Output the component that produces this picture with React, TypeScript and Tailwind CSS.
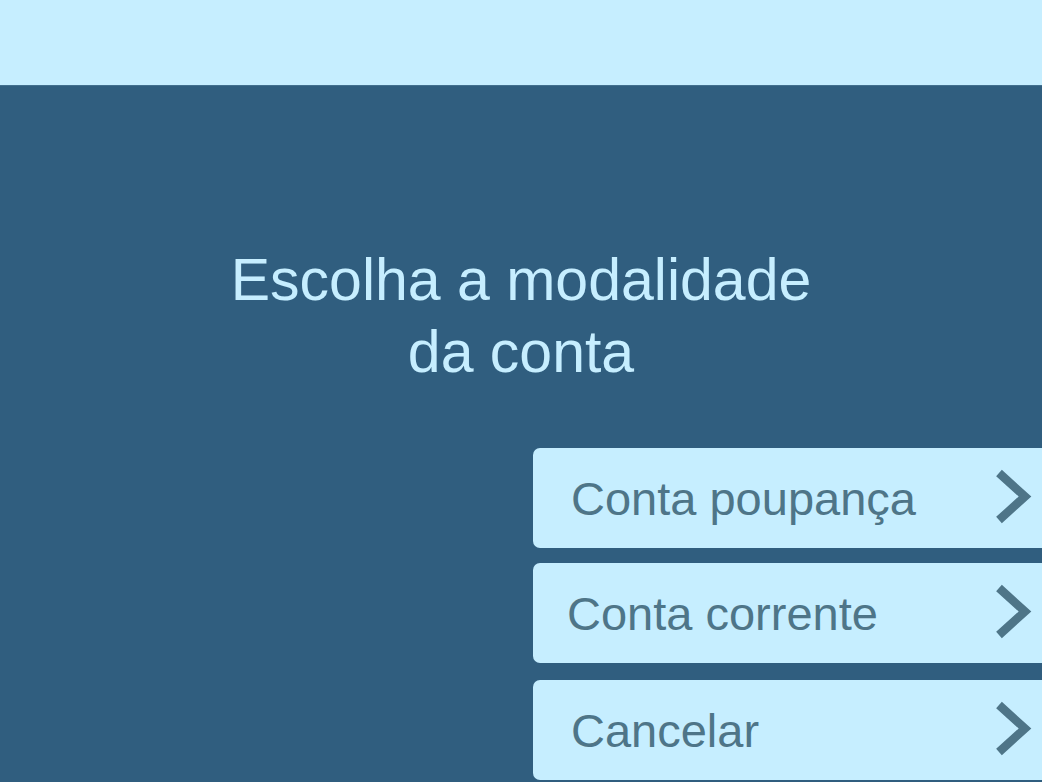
import React from "react";

function Chevron() {
  return (
    <svg width="40" height="60" viewBox="0 0 40 60" className="shrink-0">
      <polyline
        points="7,5 33,28.5 7,52"
        fill="none"
        stroke="#4e7588"
        strokeWidth="8.5"
        strokeLinecap="butt"
        strokeLinejoin="miter"
      />
    </svg>
  );
}

function Option({ label, pl, mt }: { label: string; pl: string; mt: string }) {
  return (
    <div
      className={`ml-[533px] w-[509px] h-[100px] ${mt} rounded-l-[7px] bg-[#c6eeff] flex items-center ${pl} pr-[10px]`}
    >
      <span className="text-[47px] leading-none text-[#4e7588]" style={{ fontFamily: '"Liberation Sans", Arial, sans-serif' }}>
        {label}
      </span>
      <div className="ml-auto">
        <Chevron />
      </div>
    </div>
  );
}

export default function App() {
  return (
    <div className="w-[1042px] h-[782px] overflow-hidden bg-[#305e7f] flex flex-col" style={{ fontFamily: '"Liberation Sans", Arial, sans-serif' }}>
      <div className="h-[85px] shrink-0 bg-[#c6eeff]" />
      <div className="h-[1px] shrink-0 bg-[#42708f]" />
      <div className="mt-[158px] text-center text-[59px] leading-[72px] text-[#c6eeff]">
        <div>Escolha a modalidade</div>
        <div>da conta</div>
      </div>
      <Option label="Conta poupança" pl="pl-[38px]" mt="mt-[60px]" />
      <Option label="Conta corrente" pl="pl-[34px]" mt="mt-[15px]" />
      <Option label="Cancelar" pl="pl-[38px]" mt="mt-[17px]" />
    </div>
  );
}
